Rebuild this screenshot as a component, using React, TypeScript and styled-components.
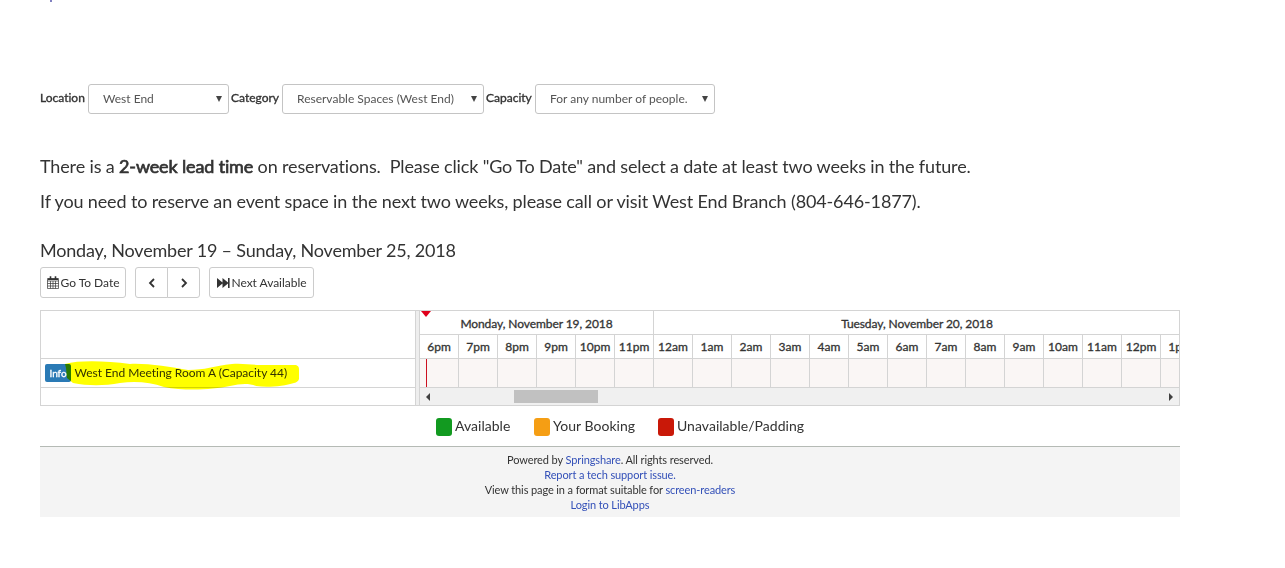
import React from "react";
import styled, { createGlobalStyle } from "styled-components";

const Global = createGlobalStyle`
  * { box-sizing: border-box; }
  body { margin: 0; background: #fff; color: #333; font-family: Lato, "Liberation Sans", sans-serif; font-size: 12px; font-variant-ligatures: none; overflow: hidden; }
`;

const Page = styled.main`
  width: 1180px;
  height: 568px;
  padding: 0 0 0 40px;
  display: flex;
  flex-direction: column;
`;
const Speck = styled.i`
  width: 2px;
  height: 2px;
  margin-left: 10px;
  background: #8080c0;
  flex: none;
`;
const Filters = styled.form`
  display: flex;
  height: 30px;
  margin-top: 82px;
`;
const FilterLabel = styled.label<{ $w: number }>`
  width: ${(p) => p.$w}px;
  line-height: 28px;
  font-size: 12px;
  -webkit-text-stroke: 0.35px #333;
  white-space: nowrap;
`;
const SelectBox = styled.div<{ $w: number }>`
  width: ${(p) => p.$w}px;
  height: 30px;
  margin-right: 2px;
  padding: 0 6px 0 14px;
  display: flex;
  align-items: center;
  justify-content: space-between;
  border: 1px solid #c4c4c4;
  border-radius: 3px;
  color: #555;
  font-size: 12px;
  line-height: 16px;
  white-space: nowrap;
`;
const SelectText = styled.span`
  padding-bottom: 1px;
`;
const Message = styled.p<{ $top: number; $ls: number }>`
  margin: ${(p) => p.$top}px 0 0;
  font-size: 18px;
  line-height: 24px;
  letter-spacing: ${(p) => p.$ls}px;
  white-space: pre;
`;
const Faux = styled.b`
  font-weight: 400;
  -webkit-text-stroke: 0.7px #333;
`;
const Toolbar = styled.div`
  display: flex;
  height: 31px;
  margin-top: 5px;
`;
const Button = styled.button<{ $w: number; $ml?: number; $join?: "left" | "right" }>`
  width: ${(p) => p.$w}px;
  margin-left: ${(p) => p.$ml ?? 0}px;
  padding: 0;
  display: flex;
  align-items: center;
  justify-content: center;
  gap: 2px;
  border: 1px solid #ccc;
  border-radius: ${(p) => (p.$join === "left" ? "3px 0 0 3px" : p.$join === "right" ? "0 3px 3px 0" : "3px")};
  background: #fff;
  color: #333;
  font: 12px/18px Lato, sans-serif;
  letter-spacing: -0.03px;
  white-space: nowrap;
`;
const Scheduler = styled.section`
  width: 1140px;
  height: 96px;
  margin-top: 12px;
  display: flex;
  border: 1px solid #d4d4d4;
`;
const Rooms = styled.div`
  width: 374px;
  display: flex;
  flex-direction: column;
`;
const RoomsHead = styled.div`
  height: 48px;
  border-bottom: 1px solid #d4d4d4;
`;
const RoomRow = styled.div`
  position: relative;
  height: 29px;
  padding: 5px 0 0 4px;
  display: flex;
  gap: 3.5px;
  border-bottom: 1px solid #d4d4d4;
  line-height: 18px;
  letter-spacing: -0.02px;
  white-space: nowrap;
`;
const InfoBadge = styled.span`
  width: 26px;
  height: 18px;
  border-radius: 2px;
  background: #2a7ab5;
  color: #fff;
  font-size: 10px;
  line-height: 18px;
  text-align: center;
  -webkit-text-stroke: 0.3px #fff;
`;
const Highlight = styled.svg`
  position: absolute;
  left: 24px;
  top: 1px;
  mix-blend-mode: multiply;
`;
const Divider = styled.div`
  width: 5px;
  border: solid #d4d4d4;
  border-width: 0 1px;
  background: #eee;
`;
const Timeline = styled.div`
  flex: 1;
  min-width: 0;
  overflow: hidden;
`;
const Line = styled.div<{ $h: number }>`
  position: relative;
  display: flex;
  height: ${(p) => p.$h}px;
  border-bottom: 1px solid #d4d4d4;
`;
const Cell = styled.div<{ $w: number; $slot?: boolean; $day?: boolean }>`
  flex: none;
  width: ${(p) => p.$w}px;
  border-right: 1px solid #d4d4d4;
  background: ${(p) => (p.$slot ? "#faf6f5" : "#fff")};
  text-align: center;
  font-size: 12px;
  line-height: ${(p) => (p.$day ? 26 : 24)}px;
  letter-spacing: ${(p) => (p.$day ? -0.08 : 0)}px;
  -webkit-text-stroke: 0.3px #333;
  white-space: nowrap;
`;
const NowArrow = styled.i`
  position: absolute;
  left: 1px;
  top: 0;
  border: 5px solid transparent;
  border-top: 6px solid #e0001b;
  border-bottom: 0;
`;
const NowLine = styled.i`
  position: absolute;
  left: 6px;
  top: 0;
  width: 1px;
  height: 28px;
  background: #cc1020;
`;
const ScrollBar = styled.div`
  height: 17px;
  display: flex;
  align-items: center;
  padding: 0 6px;
  background: #f0f0f0;
`;
const Thumb = styled.div`
  width: 84px;
  height: 13px;
  margin: 0 auto 0 84px;
  background: #c1c1c1;
`;
const Legend = styled.div`
  display: flex;
  height: 40px;
  padding: 12px 0 0 396px;
  font-size: 14px;
  line-height: 16px;
`;
const LegendItem = styled.div<{ $w: number }>`
  width: ${(p) => p.$w}px;
  display: flex;
  gap: 3px;
  letter-spacing: 0.03px;
  white-space: nowrap;
`;
const Swatch = styled.i<{ $c: string }>`
  width: 16px;
  height: 18px;
  border-radius: 3px;
  background: ${(p) => p.$c};
`;
const Footer = styled.footer`
  height: 71px;
  padding-top: 5px;
  border-top: 1px solid #b5bab5;
  background: #f4f4f4;
  text-align: center;
  font-size: 11px;
  line-height: 15px;
  letter-spacing: -0.11px;
`;
const Link = styled.a`
  color: #3350b8;
`;

const Caret = () => (
  <svg width="6" height="6" viewBox="0 0 6 6"><path d="M0 0h6L3 6z" fill="#444" /></svg>
);
const CalendarIcon = () => (
  <svg width="12" height="13" viewBox="0 0 12 13" fill="none" stroke="#333">
    <path d="M.5 2.5h11v10H.5zM.5 5h11M.5 7.5h11M.5 10h11M3.5 5v7.5M6 5v7.5M8.5 5v7.5" strokeWidth=".7" />
    <path d="M1 3.2h10" strokeWidth="1.6" />
    <path d="M3.5.3v2.6M8.5.3v2.6" strokeWidth="1.6" />
  </svg>
);
const Chevron = ({ d }: { d: string }) => (
  <svg width="8" height="10" viewBox="0 0 8 10" fill="none" stroke="#333" strokeWidth="1.8"><path d={d} /></svg>
);
const FastForward = () => (
  <svg width="13" height="10" viewBox="0 0 13 10" fill="#333"><path d="M0 0l5.500 4.500V0L11 4.500V0h1.600v10H11V5.500L5.500 10V5.500L0 10z" /></svg>
);

const hours = ["6pm", "7pm", "8pm", "9pm", "10pm", "11pm", "12am", "1am", "2am", "3am", "4am", "5am", "6am", "7am", "8am", "9am", "10am", "11am", "12pm", "1pm"];

export default function App() {
  return (
    <Page>
      <Global />
      <Speck />
      <Filters>
        <FilterLabel $w={48}>Location</FilterLabel>
        <SelectBox $w={141}><SelectText>West End</SelectText><Caret /></SelectBox>
        <FilterLabel $w={51}>Category</FilterLabel>
        <SelectBox $w={202}><SelectText>Reservable Spaces (West End)</SelectText><Caret /></SelectBox>
        <FilterLabel $w={49}>Capacity</FilterLabel>
        <SelectBox $w={180}><SelectText>For any number of people.</SelectText><Caret /></SelectBox>
      </Filters>
      <Message $top={40} $ls={-0.142}>There is a <Faux>2-week lead time</Faux> on reservations.  Please click "Go To Date" and select a date at least two weeks in the future.</Message>
      <Message $top={11} $ls={-0.135}>If you need to reserve an event space in the next two weeks, please call or visit West End Branch (804-646-1877).</Message>
      <Message $top={25} $ls={-0.19}>Monday, November 19 – Sunday, November 25, 2018</Message>
      <Toolbar>
        <Button $w={86}><CalendarIcon />Go To Date</Button>
        <Button $w={33} $ml={9} $join="left"><Chevron d="M6 1L2 5l4 4" /></Button>
        <Button $w={33} $ml={-1} $join="right"><Chevron d="M2 1l4 4-4 4" /></Button>
        <Button $w={105} $ml={9}><FastForward />Next Available</Button>
      </Toolbar>
      <Scheduler>
        <Rooms>
          <RoomsHead />
          <RoomRow>
            <InfoBadge>Info</InfoBadge>
            <span>West End Meeting Room A (Capacity 44)</span>
            <Highlight width="240" height="32" viewBox="65 360 240 32">
              <path d="M65 364C80 360 106 361 130 364C146 363 170 367 188 370C205 370 214 366 232 364C242 363 252 365 260 365L296 365Q299 366 299 369L299 379Q298 382 294 383C284 386 268 388 256 386C248 383 240 384 230 386C212 390 184 391 164 387C150 382 135 381 120 383C104 386 88 386 73 383L67 378L66 368Z" fill="#ff0" />
            </Highlight>
          </RoomRow>
        </Rooms>
        <Divider />
        <Timeline>
          <Line $h={24}>
            <Cell $w={234} $day>Monday, November 19, 2018</Cell>
            <Cell $w={527} $day>Tuesday, November 20, 2018</Cell>
            <NowArrow />
          </Line>
          <Line $h={24}>
            {hours.map((h) => <Cell key={h + "h"} $w={39}>{h}</Cell>)}
          </Line>
          <Line $h={29}>
            {hours.map((h) => <Cell key={h + "s"} $w={39} $slot />)}
            <NowLine />
          </Line>
          <ScrollBar>
            <svg width="4" height="8" viewBox="0 0 4 8"><path d="M4 0v8L0 4z" fill="#404040" /></svg>
            <Thumb />
            <svg width="4" height="8" viewBox="0 0 4 8"><path d="M0 0v8l4-4z" fill="#404040" /></svg>
          </ScrollBar>
        </Timeline>
      </Scheduler>
      <Legend>
        <LegendItem $w={98}><Swatch $c="#129a20" />Available</LegendItem>
        <LegendItem $w={124}><Swatch $c="#f59e14" />Your Booking</LegendItem>
        <LegendItem $w={150}><Swatch $c="#c91808" />Unavailable/Padding</LegendItem>
      </Legend>
      <Footer>
        <div>Powered by <Link>Springshare</Link>. All rights reserved.</div>
        <div><Link>Report a tech support issue.</Link></div>
        <div>View this page in a format suitable for <Link>screen-readers</Link></div>
        <div><Link>Login to LibApps</Link></div>
      </Footer>
    </Page>
  );
}
